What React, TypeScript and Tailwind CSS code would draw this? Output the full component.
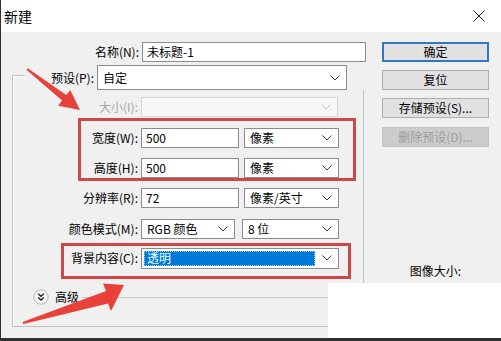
import React from 'react';

const Chevron = ({ color = '#3c3c3c' }: { color?: string }) => (
  <svg width="10" height="6" viewBox="0 0 10 6" className="shrink-0">
    <path d="M0.5 0.5 L5 5 L9.5 0.5" fill="none" stroke={color} strokeWidth="1" />
  </svg>
);

const TextBox = ({ value, className = '' }: { value: string; className?: string }) => (
  <div
    className={`flex h-[20px] items-center border border-[#8c8c8c] bg-white pl-[4px] text-[12px] text-black ${className}`}
  >
    {value}
  </div>
);

const Select = ({
  value,
  className = '',
  disabled = false,
}: {
  value?: string;
  className?: string;
  disabled?: boolean;
}) => (
  <div
    className={`flex items-center justify-between border pl-[5px] pr-[6px] text-[12px] ${
      disabled ? 'border-[#d4d4d4] bg-[#f7f7f7]' : 'border-[#8c8c8c] bg-white text-black'
    } ${className}`}
  >
    <span>{value}</span>
    <Chevron color={disabled ? '#c4c4c4' : '#3c3c3c'} />
  </div>
);

// label column ends at x=139, fields start at x=142
const Row = ({
  label,
  disabled,
  className = '',
  children,
}: {
  label: string;
  disabled?: boolean;
  className?: string;
  children: React.ReactNode;
}) => (
  <div className={`flex h-[20px] items-center ${className}`}>
    <div
      className={`w-[128px] pr-[3px] text-right text-[12px] leading-[20px] ${
        disabled ? 'text-[#a8a8a8]' : 'text-black'
      }`}
    >
      {label}
    </div>
    {children}
  </div>
);

const Button = ({
  children,
  variant = 'normal',
  className = '',
}: {
  children: React.ReactNode;
  variant?: 'default' | 'normal' | 'disabled';
  className?: string;
}) => {
  const styles = {
    default: 'border-2 border-[#2f78c4] bg-[#e1e1e1] text-black',
    normal: 'border border-[#adadad] bg-[#e1e1e1] text-black',
    disabled: 'border border-[#c4c4c4] bg-[#cccccc] text-[#9c9c9c]',
  };
  return (
    <div
      className={`flex h-[20px] w-[107px] items-center justify-center text-[12px] leading-none ${styles[variant]} ${className}`}
    >
      {children}
    </div>
  );
};

const AdvancedIcon = () => (
  <svg width="16" height="16" viewBox="0 0 16 16" className="shrink-0">
    <circle cx="8" cy="8" r="7.2" fill="#f7f7f7" stroke="#b4b4b4" strokeWidth="1" />
    <path d="M5.2 4.8 L8 7.4 L10.8 4.8 M5.2 8.4 L8 11 L10.8 8.4" fill="none" stroke="#1e1e1e" strokeWidth="1.4" />
  </svg>
);

export default function App() {
  return (
    <div className="relative h-[341px] w-[501px] overflow-hidden bg-[#f0f0f0] font-['Noto_Sans_CJK_SC','Microsoft_YaHei',sans-serif]">
      <div className="flex h-full flex-col border-b-[3px] border-l border-[#303030]">
        {/* title bar */}
        <div className="flex h-[32px] shrink-0 items-center justify-between bg-white pl-[3px] pr-[16px]">
          <span className="text-[14px] text-black">新建</span>
          <svg width="12" height="12" viewBox="0 0 12 12">
            <path d="M0.5 0.5 L11.5 11.5 M11.5 0.5 L0.5 11.5" stroke="#1a1a1a" strokeWidth="1" />
          </svg>
        </div>

        <div className="flex flex-1">
          {/* left form */}
          <div className="w-[365px] pt-[10px]">
            <div className="flex h-[20px] items-center">
              <div className="w-[141px] pr-[3px] text-right text-[12px] text-black">名称(N):</div>
              <TextBox value="未标题-1" className="w-[224px]" />
            </div>

            {/* group box */}
            <div className="ml-[11px] mt-[13px] w-[352px] border border-[#c2c2c2] pb-[21px] shadow-[inset_1px_1px_0_#ffffff]">
              <div className="-mt-[11px] ml-[12px] flex h-[25px] w-[340px] items-center bg-[#f0f0f0]">
                <div className="w-[72px] pr-[3px] text-right text-[12px] text-black">预设(P):</div>
                <Select value="自定" className="h-[25px] w-[250px]" />
              </div>

              <Row label="大小(I):" disabled className="mt-[7px]">
                <Select disabled className="h-[20px] w-[197px]" />
              </Row>

              <Row label="宽度(W):" className="mt-[11px]">
                <TextBox value="500" className="w-[98px]" />
                <Select value="像素" className="ml-[5px] h-[20px] w-[95px]" />
              </Row>

              <Row label="高度(H):" className="mt-[10px]">
                <TextBox value="500" className="w-[98px]" />
                <Select value="像素" className="ml-[5px] h-[20px] w-[95px]" />
              </Row>

              <Row label="分辨率(R):" className="mt-[10px]">
                <TextBox value="72" className="w-[98px]" />
                <Select value="像素/英寸" className="ml-[5px] h-[20px] w-[95px]" />
              </Row>

              <Row label="颜色模式(M):" className="mt-[11px]">
                <Select value="RGB 颜色" className="h-[20px] w-[94px]" />
                <Select value="8 位" className="ml-[7px] h-[20px] w-[97px]" />
              </Row>

              <Row label="背景内容(C):" className="mt-[9px]">
                <div className="flex h-[21px] w-[198px] items-center justify-between border border-[#8c8c8c] bg-white pl-[2px] pr-[6px]">
                  <div className="flex h-[15px] w-[171px] items-center border border-dotted border-[#9fd0ff] bg-[#0078d7] pl-[2px] text-[12px] text-[#eaffff]">
                    透明
                  </div>
                  <Chevron />
                </div>
              </Row>

              <div className="ml-[20px] mt-[21px] flex h-[16px] items-center">
                <AdvancedIcon />
                <span className="ml-[6px] text-[12px] text-black">高级</span>
                <div className="ml-[3px] h-px flex-1 bg-[#c8c8c8]" />
              </div>
            </div>
          </div>

          {/* right buttons */}
          <div className="ml-[16px] flex w-[107px] flex-col pt-[10px]">
            <Button variant="default">确定</Button>
            <Button className="mt-[8px]">复位</Button>
            <Button className="mt-[8px]">存储预设(S)...</Button>
            <Button variant="disabled" className="mt-[9px]">删除预设(D)...</Button>
            <div className="mt-[115px] text-center text-[12px] text-black">图像大小:</div>
          </div>
        </div>
      </div>

      {/* annotations */}
      <div className="absolute left-[78px] top-[118px] h-[63px] w-[278px] border-[3px] border-[#cd4848]" />
      <div className="absolute left-[61px] top-[243px] h-[36px] w-[290px] border-[3px] border-[#cd4848]" />
      <div className="absolute left-[328px] top-[283px] h-[55px] w-[173px] bg-white" />
      <svg className="pointer-events-none absolute left-0 top-0" width="501" height="341" viewBox="0 0 501 341">
        <polygon
          points="26.4,69.8 27.6,68.2 66.3,95.0 70.3,89.9 80,110 58.1,105.7 62.1,100.6"
          fill="#e8413a"
        />
        <polygon
          points="22.6,322 23.4,324 108,303.5 111,311 124,285 103,283.5 106,291"
          fill="#e8413a"
        />
      </svg>
    </div>
  );
}
